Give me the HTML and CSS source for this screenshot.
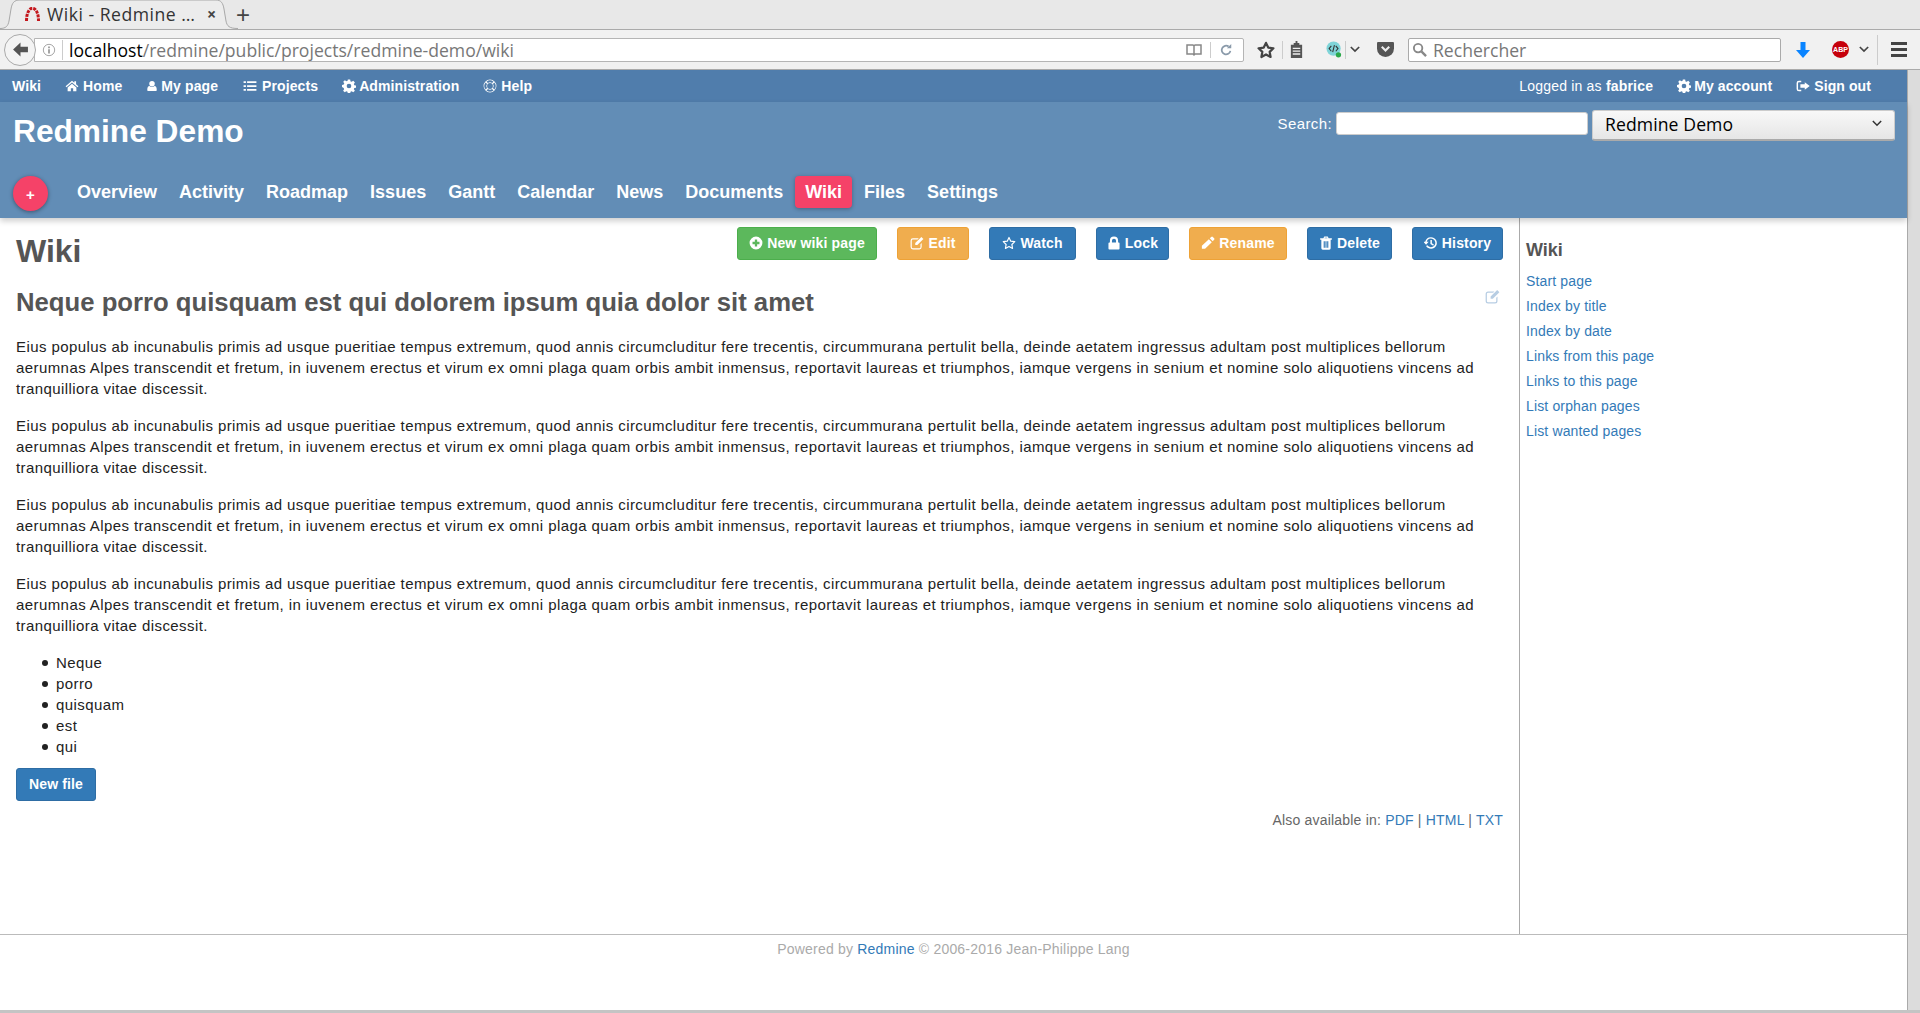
FILE: index.html
```html
<!DOCTYPE html>
<html lang="en">
  <head>
    <meta charset="UTF-8" />
    <title>Wiki - Redmine Demo</title>
    <link rel="stylesheet" href="styles.css">
  </head>
  <body>
    <svg class="sprite" width="0" height="0">
      <symbol id="i-home" viewBox="0 0 24 24"><path d="M12 3 L1 12.5 L2.5 14 L12 6 L21.5 14 L23 12.5 L19 9 V4 H16 V6.5 Z M4.5 14.5 V21 H10 V16 H14 V21 H19.5 V14.5 L12 8 Z"/></symbol>
      <symbol id="i-user" viewBox="0 0 24 24"><circle cx="12" cy="7.5" r="5.5"/><path d="M4 22 Q2.5 22 2.5 20 C2.5 15 4 12 7 12 Q9 14 12 14 Q15 14 17 12 C20 12 21.5 15 21.5 20 Q21.5 22 20 22 Z"/></symbol>
      <symbol id="i-list" viewBox="0 0 24 24"><path d="M1 4h4v3H1zM7 4h16v3H7zM1 10.500h4v3H1zM7 10.500h16v3H7zM1 17h4v3H1zM7 17h16v3H7z"/></symbol>
      <symbol id="i-cog" viewBox="0 0 24 24"><path fill-rule="evenodd" d="M10 1h4l.6 3.100 2 .8 2.700-1.800 2.800 2.800-1.800 2.700.8 2 3.100.6v3.600l-3.100.6-.8 2 1.800 2.700-2.800 2.800-2.700-1.800-2 .8-.6 3.100h-4l-.6-3.100-2-.8-2.700 1.800-2.800-2.800 1.800-2.700-.8-2L0 13.800v-3.600l3.100-.6.8-2-1.800-2.700 2.800-2.800 2.700 1.800 2-.8zM12 8a4 4 0 1 0 0 8 4 4 0 0 0 0-8z"/></symbol>
      <symbol id="i-help" viewBox="0 0 24 24"><path fill-rule="evenodd" d="M12 1a11 11 0 1 0 0 22 11 11 0 0 0 0-22zM12 7a5 5 0 1 1 0 10 5 5 0 0 1 0-10zM6 4.500a9.500 9.500 0 0 1 12 0L15.500 7a6 6 0 0 0-7 0zM4.500 6 7 8.500a6 6 0 0 0 0 7L4.500 18a9.500 9.500 0 0 1 0-12zM19.500 6a9.500 9.500 0 0 1 0 12L17 15.500a6 6 0 0 0 0-7zM8.500 17a6 6 0 0 0 7 0l2.500 2.500a9.500 9.500 0 0 1-12 0z"/></symbol>
      <symbol id="i-signout" viewBox="0 0 24 24"><path d="M9 3H5a4 4 0 0 0-4 4v10a4 4 0 0 0 4 4h4v-2.500H5A1.500 1.500 0 0 1 3.500 17V7A1.500 1.500 0 0 1 5 5.500h4zM15 5.500 23.500 12 15 18.500V15H7.500V9H15z"/></symbol>
      <symbol id="i-plus" viewBox="0 0 24 24"><path fill-rule="evenodd" d="M12 1a11 11 0 1 0 0 22 11 11 0 0 0 0-22zM10 6h4v4h4v4h-4v4h-4v-4H6v-4h4z"/></symbol>
      <symbol id="i-edit" viewBox="0 0 24 24"><path d="M5 4h10l-2 2H5a2 2 0 0 0-2 2v11a2 2 0 0 0 2 2h11a2 2 0 0 0 2-2v-5l2-2v7a4 4 0 0 1-4 4H5a4 4 0 0 1-4-4V8a4 4 0 0 1 4-4z"/><path d="M19.500 1.500 23 5 12.500 15.500H9V12z"/></symbol>
      <symbol id="i-star" viewBox="0 0 24 24"><path fill="none" stroke="currentColor" stroke-width="2" stroke-linejoin="round" d="M12 2.500l3 6.300 6.900.9-5 4.800 1.200 6.800-6.100-3.300-6.100 3.300 1.200-6.800-5-4.800 6.900-.9z"/></symbol>
      <symbol id="i-lock" viewBox="0 0 24 24"><path fill-rule="evenodd" d="M12 1a7 7 0 0 0-7 7v3H4a1.500 1.500 0 0 0-1.500 1.500v9A1.500 1.500 0 0 0 4 23h16a1.500 1.500 0 0 0 1.500-1.500v-9A1.500 1.500 0 0 0 20 11h-1V8a7 7 0 0 0-7-7zM12 4.500A3.500 3.500 0 0 1 15.500 8v3h-7V8A3.500 3.500 0 0 1 12 4.500z"/></symbol>
      <symbol id="i-pencil" viewBox="0 0 24 24"><path d="M17.500 1.500a2 2 0 0 1 2.800 0l2.200 2.200a2 2 0 0 1 0 2.800L20 9l-5-5zM13.500 5.500l5 5L7 22H1.500v-5.500z"/></symbol>
      <symbol id="i-trash" viewBox="0 0 24 24"><path fill-rule="evenodd" d="M9 1h6l1.500 3H22v2.500h-2V21a2.500 2.500 0 0 1-2.500 2.500h-11A2.500 2.500 0 0 1 4 21V6.500H2V4h5.500zM10 3 9.500 4h5L14 3zM8 9v11h2V9zM11 9v11h2V9zM14 9v11h2V9z"/></symbol>
      <symbol id="i-history" viewBox="0 0 24 24"><path d="M12 2a10 10 0 1 1-8.500 15.200l2.200-1.300A7.500 7.500 0 1 0 4.600 10H8l-4.500 5L-1 10h3.100A10 10 0 0 1 12 2z"/><path d="M11 7h2.500v5.500l3.500 2-1.200 2-4.800-2.800z"/></symbol>
    </svg>

    <div class="browser-tabs">
      <div class="tab">
        <svg class="tab-shape" viewBox="0 0 238 30" width="238" height="30"><path fill="#ececec" stroke="#a8a8a8" d="M0 29.500 C6 29.500 8 27 9 22 L11 10 C12 4 14 1 20 1 H216 C221 1 223 4 224 10 L226 22 C227 27 229 29.500 238 29.500"/></svg>
        <svg class="tab-logo" viewBox="0 0 16 14"><path fill="none" stroke="#c4161c" stroke-width="3" stroke-dasharray="3 1" d="M2 14 C2 -3 14 -3 14 14"/></svg>
        <span class="tab-title">Wiki - Redmine …</span>
        <span class="tab-close">×</span>
      </div>
      <span class="tab-new">+</span>
    </div>

    <div class="browser-bar">
      <div class="back-btn">
        <svg viewBox="0 0 16 16" width="17" height="17"><path fill="#555" d="M8 1.500 1 8l7 6.500V10.500h7v-5H8z"/></svg>
      </div>
      <div class="url-box">
        <svg class="info-icon" viewBox="0 0 16 16" width="14" height="14"><circle cx="8" cy="8" r="6.500" fill="none" stroke="#999"/><path fill="#999" d="M7 7h2v5H7zM7 4h2v2H7z"/></svg>
        <span class="url-text"><b>localhost</b>/redmine/public/projects/redmine-demo/wiki</span>
        <svg class="url-icon" viewBox="0 0 16 16" width="16" height="16"><path fill="none" stroke="#888" stroke-width="1.500" d="M1 3h6l1 1 1-1h6v9H9l-1 1-1-1H1zM8 4v9"/></svg>
        <span class="url-sep"></span>
        <svg class="url-icon" viewBox="0 0 16 16" width="14" height="14"><path fill="none" stroke="#8a9aaa" stroke-width="2" d="M13 9a5 5 0 1 1-2-5"/><path fill="#8a9aaa" d="M9 6h5V1z"/></svg>
      </div>
      <svg class="bar-icon star-icon" viewBox="0 0 24 24" width="18" height="18"><path fill="none" stroke="#444" stroke-width="3" stroke-linejoin="round" d="M12 2.500l3 6.300 6.900.9-5 4.800 1.200 6.800-6.100-3.300-6.100 3.300 1.200-6.800-5-4.800 6.900-.9z"/></svg>
      <span class="bar-sep"></span>
      <svg class="bar-icon clip-icon" viewBox="0 0 16 18" width="15" height="17"><path fill="#555" d="M5 2h2V0h2v2h2v2h3v14H2V4h3z"/><path fill="#eee" d="M4 7h8v1.500H4zM4 10h8v1.500H4zM4 13h8v1.500H4z"/></svg>
      <svg class="bar-icon code-icon" viewBox="0 0 18 20" width="16" height="19"><circle cx="8.500" cy="9" r="8" fill="#7fd4d8"/><path fill="none" stroke="#333" stroke-width="1.200" d="M6 6 3.500 9 6 12M11 6l2.500 3L11 12M9.500 5l-2 8"/><circle cx="14" cy="16" r="3" fill="#2aa84a"/></svg>
      <span class="bar-sep short"></span>
      <svg class="bar-icon chev" viewBox="0 0 12 8" width="10" height="7"><path fill="none" stroke="#444" stroke-width="2" d="M1 1l5 5 5-5"/></svg>
      <svg class="bar-icon pocket" viewBox="0 0 16 16" width="17" height="17"><path fill="#555" d="M1 1h14a1 1 0 0 1 1 1v5a8 8 0 0 1-16 0V2a1 1 0 0 1 1-1z"/><path fill="none" stroke="#eee" stroke-width="2" d="M4.500 5.500 8 9l3.500-3.500"/></svg>
      <div class="search-box">
        <svg viewBox="0 0 16 16" width="15" height="15"><circle cx="6.500" cy="6.500" r="4.500" fill="none" stroke="#888" stroke-width="2"/><path stroke="#888" stroke-width="2.500" d="M10 10l5 5"/></svg>
        <span>Rechercher</span>
      </div>
      <svg class="bar-icon down-icon" viewBox="0 0 16 18" width="16" height="18"><path fill="#0a84ff" d="M5.500 1h5v8H15l-7 8-7-8h4.500z"/></svg>
      <div class="abp">ABP</div>
      <svg class="bar-icon chev abp-chev" viewBox="0 0 12 8" width="10" height="7"><path fill="none" stroke="#444" stroke-width="2" d="M1 1l5 5 5-5"/></svg>
      <span class="bar-sep tall"></span>
      <div class="burger"><i></i><i></i><i></i></div>
    </div>

    <div class="viewport">
      <div class="page">
        <div class="top-menu">
          <ul class="top-left">
            <li>Wiki</li>
            <li><svg class="fa"><use href="#i-home"/></svg>Home</li>
            <li><svg class="fa fa-narrow"><use href="#i-user"/></svg>My page</li>
            <li><svg class="fa fa-wide"><use href="#i-list"/></svg>Projects</li>
            <li><svg class="fa fa-tight"><use href="#i-cog"/></svg>Administration</li>
            <li><svg class="fa"><use href="#i-help"/></svg>Help</li>
          </ul>
          <ul class="top-right">
            <li class="logged">Logged in as <b>fabrice</b></li>
            <li><svg class="fa fa-tight"><use href="#i-cog"/></svg>My account</li>
            <li><svg class="fa"><use href="#i-signout"/></svg>Sign out</li>
          </ul>
        </div>

        <div class="header">
          <div class="header-top">
            <h1 class="project">Redmine Demo</h1>
            <div class="quick-search">
              <label>Search:</label>
              <input type="text" class="q-input" />
              <div class="jump-box">Redmine Demo
                <svg viewBox="0 0 12 8" width="10" height="7"><path fill="none" stroke="#333" stroke-width="1.800" d="M1 1l5 5 5-5"/></svg>
              </div>
            </div>
          </div>
          <div class="main-menu">
            <div class="fab">+</div>
            <a>Overview</a>
            <a>Activity</a>
            <a>Roadmap</a>
            <a>Issues</a>
            <a>Gantt</a>
            <a>Calendar</a>
            <a>News</a>
            <a>Documents</a>
            <a class="selected">Wiki</a>
            <a>Files</a>
            <a>Settings</a>
          </div>
        </div>

        <div class="main">
          <div class="content">
            <div class="title-row">
              <h2>Wiki</h2>
              <div class="actions">
                <a class="btn green"><svg class="fa"><use href="#i-plus"/></svg>New wiki page</a>
                <a class="btn orange"><svg class="fa"><use href="#i-edit"/></svg>Edit</a>
                <a class="btn blue"><svg class="fa"><use href="#i-star"/></svg>Watch</a>
                <a class="btn blue"><svg class="fa"><use href="#i-lock"/></svg>Lock</a>
                <a class="btn orange"><svg class="fa"><use href="#i-pencil"/></svg>Rename</a>
                <a class="btn blue"><svg class="fa"><use href="#i-trash"/></svg>Delete</a>
                <a class="btn blue"><svg class="fa"><use href="#i-history"/></svg>History</a>
              </div>
            </div>
            <div class="wiki-head">
              <h3>Neque porro quisquam est qui dolorem ipsum quia dolor sit amet</h3>
              <svg class="section-edit"><use href="#i-edit"/></svg>
            </div>
            <p>Eius populus ab incunabulis primis ad usque pueritiae tempus extremum, quod annis circumcluditur fere trecentis, circummurana pertulit bella, deinde aetatem ingressus adultam post multiplices bellorum aerumnas Alpes transcendit et fretum, in iuvenem erectus et virum ex omni plaga quam orbis ambit inmensus, reportavit laureas et triumphos, iamque vergens in senium et nomine solo aliquotiens vincens ad tranquilliora vitae discessit.</p>
            <p>Eius populus ab incunabulis primis ad usque pueritiae tempus extremum, quod annis circumcluditur fere trecentis, circummurana pertulit bella, deinde aetatem ingressus adultam post multiplices bellorum aerumnas Alpes transcendit et fretum, in iuvenem erectus et virum ex omni plaga quam orbis ambit inmensus, reportavit laureas et triumphos, iamque vergens in senium et nomine solo aliquotiens vincens ad tranquilliora vitae discessit.</p>
            <p>Eius populus ab incunabulis primis ad usque pueritiae tempus extremum, quod annis circumcluditur fere trecentis, circummurana pertulit bella, deinde aetatem ingressus adultam post multiplices bellorum aerumnas Alpes transcendit et fretum, in iuvenem erectus et virum ex omni plaga quam orbis ambit inmensus, reportavit laureas et triumphos, iamque vergens in senium et nomine solo aliquotiens vincens ad tranquilliora vitae discessit.</p>
            <p>Eius populus ab incunabulis primis ad usque pueritiae tempus extremum, quod annis circumcluditur fere trecentis, circummurana pertulit bella, deinde aetatem ingressus adultam post multiplices bellorum aerumnas Alpes transcendit et fretum, in iuvenem erectus et virum ex omni plaga quam orbis ambit inmensus, reportavit laureas et triumphos, iamque vergens in senium et nomine solo aliquotiens vincens ad tranquilliora vitae discessit.</p>
            <ul class="words">
              <li>Neque</li>
              <li>porro</li>
              <li>quisquam</li>
              <li>est</li>
              <li>qui</li>
            </ul>
            <a class="btn blue new-file">New file</a>
            <div class="other-formats">Also available in: <a>PDF</a> | <a>HTML</a> | <a>TXT</a></div>
          </div>
          <div class="sidebar">
            <h4>Wiki</h4>
            <a>Start page</a>
            <a>Index by title</a>
            <a>Index by date</a>
            <a>Links from this page</a>
            <a>Links to this page</a>
            <a>List orphan pages</a>
            <a>List wanted pages</a>
          </div>
        </div>

        <div class="footer">Powered by <a>Redmine</a> © 2006-2016 Jean-Philippe Lang</div>
      </div>
      <div class="scrollbar"></div>
    </div>
    <div class="status-line"></div>
  </body>
</html>
```

FILE: styles.css
```css
* {
  box-sizing: border-box;
}
html,
body {
  margin: 0;
  height: 1013px;
  overflow: hidden;
}
body {
  display: flex;
  flex-direction: column;
  font-family: "Liberation Sans", Arial, sans-serif;
  background: #fff;
}
.sprite {
  position: absolute;
}
ul {
  list-style: none;
  margin: 0;
  padding: 0;
}
.fa {
  width: 14px;
  height: 14px;
  fill: currentColor;
  margin-right: 4px;
  flex: none;
}
.fa-narrow {
  width: 12px;
  margin-right: 3px;
}
.fa-wide {
  width: 16px;
  margin-right: 4px;
}
.fa-tight {
  margin-right: 3px;
}

/* browser chrome */
.browser-tabs {
  height: 30px;
  background: #e8e8e8;
  border-bottom: 1px solid #aaa;
  display: flex;
  align-items: flex-end;
  flex: none;
}
.tab {
  width: 238px;
  height: 30px;
  position: relative;
  display: flex;
  align-items: center;
  padding: 0 0 1px 24px;
  font-family: "Open Sans", sans-serif;
  font-size: 17.6px;
  letter-spacing: 0.5px;
  color: #333;
}
.tab-shape {
  position: absolute;
  left: 0;
  top: 0;
}
.tab-logo,
.tab-title,
.tab-close {
  position: relative;
}
.tab-logo {
  width: 17px;
  height: 14px;
  margin-right: 6px;
  flex: none;
}
.tab-title {
  width: 160px;
  white-space: nowrap;
  flex: none;
}
.tab-close {
  font-weight: bold;
  font-size: 16px;
  color: #444;
}
.tab-new {
  font-size: 24px;
  line-height: 28px;
  color: #444;
  margin-left: -2px;
  font-family: "Liberation Sans", sans-serif;
}
.browser-bar {
  height: 40px;
  background: #f1f1f1;
  border-bottom: 1px solid #aaa;
  display: flex;
  align-items: center;
  flex: none;
}
.back-btn {
  width: 32px;
  height: 32px;
  margin-left: 4px;
  border: 1px solid #aaa;
  border-radius: 50%;
  background: #f4f4f4;
  display: flex;
  align-items: center;
  justify-content: center;
  z-index: 1;
}
.url-box {
  width: 1210px;
  height: 24px;
  margin-left: -2px;
  background: #fff;
  border: 1px solid #b5b5b5;
  border-radius: 0 2px 2px 0;
  display: flex;
  align-items: center;
  padding: 0 2px 0 7px;
  font-family: "Open Sans", sans-serif;
  font-size: 17.6px;
  color: #777;
}
.url-text {
  flex: 1;
  margin-left: 6px;
  padding-left: 6px;
  border-left: 1px solid #ccc;
  line-height: 20px;
}
.url-text b {
  font-weight: 400;
  color: #000;
}
.url-icon {
  margin-right: 8px;
}
.url-sep {
  width: 1px;
  height: 16px;
  background: #ccc;
  margin-right: 8px;
}
.star-icon {
  margin-left: 13px;
}
.bar-sep {
  width: 1px;
  height: 18px;
  background: #ccc;
  margin: 0 6px 0 7px;
}
.bar-sep.short {
  margin: 0 4px 0 3px;
}
.bar-sep.tall {
  height: 30px;
  margin: 0 13px 0 8px;
}
.code-icon {
  margin-left: 22px;
}
.pocket {
  margin-left: 17px;
}
.search-box {
  width: 373px;
  height: 24px;
  margin-left: 14px;
  background: #fff;
  border: 1px solid #aaa;
  border-radius: 2px;
  display: flex;
  align-items: center;
  gap: 6px;
  padding-left: 3px;
  font-family: "Open Sans", sans-serif;
  font-size: 17.6px;
  color: #777;
}
.down-icon {
  margin-left: 14px;
}
.abp {
  width: 17px;
  height: 17px;
  margin-left: 21px;
  border-radius: 50%;
  background: #c6000b;
  color: #fff;
  font-size: 7px;
  font-weight: bold;
  line-height: 17px;
  text-align: center;
}
.abp-chev {
  margin-left: 10px;
}
.burger {
  width: 16px;
  display: flex;
  flex-direction: column;
  gap: 3px;
}
.burger i {
  height: 3px;
  background: #444;
}

/* page */
.viewport {
  flex: 1;
  display: flex;
  min-height: 0;
}
.page {
  flex: 1;
  display: flex;
  flex-direction: column;
  min-width: 0;
}
.scrollbar {
  width: 13px;
  background: #dcdcdc;
  border-left: 1px solid #aaa;
}
.status-line {
  height: 3px;
  flex: none;
  background: #c4c4c4;
}
.top-menu {
  height: 32px;
  background: #507dac;
  color: #fff;
  font-size: 14px;
  font-weight: bold;
  letter-spacing: 0.1px;
  display: flex;
  justify-content: space-between;
  align-items: center;
  padding: 0 36px 1px 12px;
  flex: none;
}
.top-left,
.top-right {
  display: flex;
  gap: 24px;
}
.top-left li,
.top-right li {
  display: flex;
  align-items: center;
}
.top-right .logged {
  font-weight: normal;
  letter-spacing: 0.2px;
  white-space: pre;
}
.header {
  height: 116px;
  background: #628db6;
  box-shadow: 0 3px 6px rgba(0, 0, 0, 0.2);
  position: relative;
  flex: none;
  padding: 8px 12px 0 13px;
}
.header-top {
  height: 62px;
  display: flex;
  justify-content: space-between;
  align-items: flex-start;
}
.project {
  margin: 4px 0 0;
  color: #fff;
  font-size: 31.7px;
  font-weight: bold;
  line-height: 34px;
}
.quick-search {
  display: flex;
  align-items: center;
  color: #fff;
  font-size: 15px;
  letter-spacing: 0.4px;
  height: 30px;
}
.quick-search label {
  margin: 0 4px 3px 0;
}
.q-input {
  width: 252px;
  height: 23px;
  border: 1px solid #ccc;
  border-radius: 3px;
  background: #fff;
  margin: 0 4px 3px 0;
}
.jump-box {
  width: 303px;
  height: 31px;
  border: 1px solid #ccc;
  border-bottom: 2px solid #aaa;
  border-radius: 3px;
  background: linear-gradient(#f8f8f8, #e6e6e6);
  color: #000;
  font-family: "Open Sans", sans-serif;
  font-size: 17.6px;
  letter-spacing: 0.1px;
  display: flex;
  align-items: center;
  justify-content: space-between;
  padding: 0 12px 2px;
}
.main-menu {
  display: flex;
  align-items: center;
  color: #fff;
  font-size: 18px;
  font-weight: bold;
  gap: 22px;
}
.main-menu a {
  line-height: 32px;
}
.fab {
  width: 35px;
  height: 35px;
  border-radius: 50%;
  background: #f54268;
  box-shadow: 0 1px 4px rgba(0, 0, 0, 0.4);
  font-size: 15px;
  line-height: 37px;
  text-align: center;
  margin: 4px 7px 0 0;
}
.main-menu .selected {
  background: #f54268;
  border-radius: 4px;
  padding: 0 10px;
  margin: 0 -10px;
  box-shadow: 0 1px 4px rgba(0, 0, 0, 0.3);
}
.main {
  flex: 1;
  display: flex;
  min-height: 0;
}
.content {
  flex: 1;
  min-width: 0;
  padding: 9px 16px 0 16px;
  font-size: 15px;
  line-height: 21px;
  letter-spacing: 0.42px;
  color: #222;
}
.title-row {
  display: flex;
  justify-content: space-between;
  align-items: flex-start;
}
h2 {
  margin: 0;
  font-size: 32px;
  line-height: 48px;
  letter-spacing: 0;
  color: #555;
}
.actions {
  display: grid;
  grid-template-columns: 140px 72px 87px 73px 98px 85px 91px;
  gap: 20px;
}
.btn {
  display: inline-flex;
  align-items: center;
  justify-content: center;
  height: 33px;
  padding: 0 0 1px;
  border-radius: 3px;
  color: #fff;
  font-size: 14px;
  font-weight: bold;
  letter-spacing: 0.15px;
}
.green {
  background: #5cb85c;
  border: 1px solid #4cae4c;
}
.orange {
  background: #f0ad4e;
  border: 1px solid #eea236;
}
.blue {
  background: #337ab7;
  border: 1px solid #2e6da4;
}
.wiki-head {
  display: flex;
  justify-content: space-between;
  align-items: flex-start;
  margin: 8px 0 15px;
}
h3 {
  margin: 0;
  font-size: 25.7px;
  line-height: 38px;
  letter-spacing: 0;
  color: #555;
}
.section-edit {
  width: 15px;
  height: 15px;
  fill: #b7cde3;
  margin: 6px 3px 0 0;
}
p {
  margin: 0 0 16px;
}
.words {
  padding-left: 26px;
  margin-bottom: 11px;
}
.words li {
  display: flex;
  align-items: center;
}
.words li::before {
  content: "";
  width: 6px;
  height: 6px;
  border-radius: 50%;
  background: #222;
  margin-right: 8px;
}
.new-file {
  width: 80px;
}
.other-formats {
  text-align: right;
  margin-top: 9px;
  font-size: 14px;
  letter-spacing: 0.2px;
  color: #666;
}
.other-formats a {
  color: #337ab7;
}
.sidebar {
  width: 388px;
  flex: none;
  border-left: 1px solid #aaa;
  padding: 21px 0 0 6px;
  display: flex;
  flex-direction: column;
}
h4 {
  margin: 0 0 8px;
  font-size: 18px;
  line-height: 22px;
  color: #555;
}
.sidebar a {
  color: #337ab7;
  font-size: 14px;
  line-height: 25px;
  letter-spacing: 0.15px;
}
.footer {
  height: 76px;
  flex: none;
  border-top: 1px solid #bbb;
  text-align: center;
  font-size: 14px;
  letter-spacing: 0.2px;
  color: #aaa;
  padding-top: 4px;
  line-height: 20px;
}
.footer a {
  color: #337ab7;
}
```
